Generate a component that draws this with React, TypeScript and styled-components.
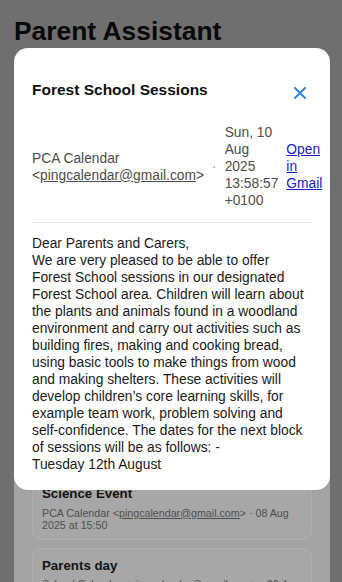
import React from "react";
import styled, { createGlobalStyle } from "styled-components";

const GlobalStyle = createGlobalStyle`
  html, body { margin: 0; padding: 0; }
  body {
    font-family: "Liberation Sans", Arial, Helvetica, sans-serif;
    background: #9f9f9f;
    overflow: hidden;
  }
  * { box-sizing: border-box; }
`;

const Page = styled.div`
  position: relative;
  height: 582px;
  overflow: hidden;
  padding: 16px 12px 0 14px;
  background: #9f9f9f;
`;

const AppTitle = styled.h1`
  margin: 0;
  font-size: 26.4px;
  line-height: 30px;
  font-weight: 700;
  color: #0d0d0d;
`;

const Panel = styled.section`
  margin-top: 8px;
  background: #eaeaea;
  border-radius: 14px;
  padding: 422px 18px 18px;
  display: flex;
  flex-direction: column;
  gap: 8px;
`;

const Card = styled.article`
  background: #f0f0f0;
  border: 1px solid #fbfbfb;
  border-radius: 9px;
  padding: 8px 9px 7px;
`;

const CardTitle = styled.h3`
  margin: 0;
  font-size: 13.3px;
  line-height: 18px;
  font-weight: 700;
  color: #1c1c1c;
`;

const CardMeta = styled.div`
  margin-top: 3.5px;
  font-size: 10.7px;
  line-height: 12.5px;
  color: #727272;
`;

const Email = styled.a`
  color: inherit;
  text-decoration: underline;
`;

const Overlay = styled.div`
  position: absolute;
  inset: 0;
  background: rgba(0, 0, 0, 0.3);
  padding: 48px 12px 0 14px;
`;

const Modal = styled.div`
  background: #ffffff;
  border-radius: 14px;
  padding: 28px 18px 17px;
`;

const ModalHeader = styled.div`
  height: 28px;
  display: flex;
  align-items: center;
  justify-content: space-between;
`;

const ModalTitle = styled.h2`
  margin: 0;
  font-size: 15.5px;
  line-height: 20px;
  font-weight: 700;
  color: #111;
`;

const CloseButton = styled.button`
  width: 24px;
  height: 28px;
  padding: 5px 0 0;
  border: none;
  background: none;
  color: #2f7ff0;
  display: flex;
  align-items: center;
  justify-content: center;
`;

const MetaRow = styled.div`
  margin-top: 20px;
  display: flex;
  align-items: center;
  gap: 8px;
  font-size: 13.8px;
  line-height: 17px;
  color: #4d4d4d;
  padding-bottom: 13px;
  border-bottom: 1px solid #e6e6e6;
`;

const Sender = styled.span``;

const Dot = styled.span`
  color: #9a9a9a;
`;

const DateText = styled.span``;

const GmailLink = styled.a`
  color: #2020d0;
  text-decoration: underline;
`;

const Body = styled.div`
  margin-top: 12px;
  font-size: 13.8px;
  line-height: 17px;
  color: #1a1a1a;
  white-space: pre-line;
`;

type Mail = { title: string; from: string; when: string };

const mails: Mail[] = [
  { title: "Science Event", from: "PCA Calendar", when: "08 Aug 2025 at 15:50" },
  { title: "Parents day", from: "School Calendar", when: "20 Jun 2025 at 09:00" },
];

const bodyText = `Dear Parents and Carers,
We are very pleased to be able to offer
Forest School sessions in our designated
Forest School area. Children will learn about
the plants and animals found in a woodland
environment and carry out activities such as
building fires, making and cooking bread,
using basic tools to make things from wood
and making shelters. These activities will
develop children\u2019s core learning skills, for
example team work, problem solving and
self-confidence. The dates for the next block
of sessions will be as follows: -
Tuesday 12th August`;

export default function App() {
  return (
    <>
      <GlobalStyle />
      <Page>
        <AppTitle>Parent Assistant</AppTitle>
        <Panel>
          {mails.map((m) => (
            <Card key={m.title}>
              <CardTitle>{m.title}</CardTitle>
              <CardMeta>
                {m.from} &lt;<Email href="#">pingcalendar@gmail.com</Email>&gt; · {m.when}
              </CardMeta>
            </Card>
          ))}
        </Panel>
        <Overlay>
          <Modal role="dialog">
            <ModalHeader>
              <ModalTitle>Forest School Sessions</ModalTitle>
              <CloseButton aria-label="Close">
                <svg width="12" height="12" viewBox="0 0 12 12" fill="none">
                  <path d="M1 1L11 11M11 1L1 11" stroke="currentColor" strokeWidth="1.9" strokeLinecap="round" />
                </svg>
              </CloseButton>
            </ModalHeader>
            <MetaRow>
              <Sender>
                PCA Calendar &lt;<Email href="#">pingcalendar@gmail.com</Email>&gt;
              </Sender>
              <Dot>·</Dot>
              <DateText>Sun, 10 Aug 2025 13:58:57 +0100</DateText>
              <GmailLink href="#">Open in Gmail</GmailLink>
            </MetaRow>
            <Body>{bodyText}</Body>
          </Modal>
        </Overlay>
      </Page>
    </>
  );
}
